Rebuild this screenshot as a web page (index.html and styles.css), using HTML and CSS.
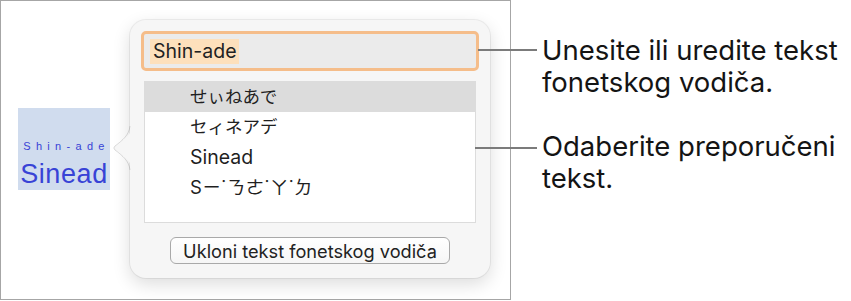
FILE: index.html
```html
<!DOCTYPE html>
<html lang="hr">
<head>
<meta charset="utf-8">
<title>Fonetski vodič</title>
<link rel="stylesheet" href="styles.css">
</head>
<body>
<div class="scene">
  <div class="frame">
    <div class="word">
      <span class="ruby">Shin-ade</span>
      <span class="base">Sinead</span>
    </div>
    <div class="popover">
      <svg class="arrow" width="22" height="46" viewBox="0 0 22 46">
        <path d="M21 0 C21 10 13 15 4 21 Q1.5 23 4 25 C13 31 21 36 21 46 Z" fill="#f6f6f6"/>
        <path d="M19 1 C18 10 12 15 4 21 Q1.5 23 4 25 C12 31 18 36 19 45" fill="none" stroke="rgba(0,0,0,0.13)" stroke-width="1"/>
      </svg>
      <div class="field"><span class="sel">Shin-ade</span></div>
      <ul class="list">
        <li class="row cjk active">せぃねあで</li>
        <li class="row cjk">セィネアデ</li>
        <li class="row">Sinead</li>
        <li class="row bopo">Sㄧ˙ㄋㄜ˙ㄚ˙ㄉ</li>
      </ul>
      <div class="actions"><button class="btn">Ukloni tekst fonetskog vodiča</button></div>
    </div>
  </div>
  <div class="notes">
    <p class="note">Unesite ili uredite tekst<br>fonetskog vodiča.</p>
    <p class="note second">Odaberite preporučeni<br>tekst.</p>
  </div>
  <span class="leader leader-1"></span>
  <span class="leader leader-2"></span>
</div>
</body>
</html>
```
FILE: styles.css
```css
* { box-sizing: border-box; }
html, body { margin: 0; padding: 0; background: #fff; }
body { font-family: Inter, "Noto Sans CJK JP", sans-serif; color: #1d1d1d; }

.scene {
  position: relative;
  display: flex;
  align-items: flex-start;
  width: 851px;
  height: 301px;
}

.frame {
  display: flex;
  align-items: flex-start;
  width: 511px;
  height: 300px;
  border: 1px solid #a6a6a6;
  padding: 19px 0 0 17px;
  background: #fff;
}

.word {
  display: flex;
  flex-direction: column;
  align-items: center;
  width: 92px;
  height: 82px;
  margin-top: 88px;
  padding-top: 31px;
  background: #d0dcee;
  color: #3843d6;
  font-family: "Liberation Sans", Arial, sans-serif;
}
.ruby {
  font-size: 11px;
  line-height: 14px;
  letter-spacing: 5.3px;
  margin-left: 5px;
}
.base {
  margin-top: 6px;
  font-size: 27px;
  line-height: 30px;
  letter-spacing: 0.6px;
}

.popover {
  position: relative;
  display: flex;
  flex-direction: column;
  width: 360px;
  height: 258px;
  margin-left: 20px;
  padding: 11px;
  background: #f6f6f6;
  border-radius: 16px;
  box-shadow: 0 0 0 1px rgba(0,0,0,0.06), 0 6px 18px rgba(0,0,0,0.14);
}
.arrow {
  position: absolute;
  left: -19px;
  top: 105px;
}

.field {
  display: flex;
  align-items: center;
  height: 40px;
  padding-left: 6px;
  border: 3px solid #f5bd8a;
  border-radius: 5px;
  background: #ebebeb;
}
.sel {
  background: #fde0bc;
  font-size: 19.5px;
  line-height: 25px;
  padding: 0 2px 0 3px;
  color: #222;
}

.list {
  list-style: none;
  margin: 10px 3px 0 3px;
  padding: 0;
  height: 142px;
  border: 1px solid #dcdcdc;
  background: #fff;
}
.row {
  height: 30px;
  line-height: 30px;
  padding-left: 45px;
  font-size: 19.5px;
  color: #1f1f1f;
}
.row.cjk { font-size: 17.5px; }
.row.active { background: #dcdcdc; }
.row.bopo {
  font-family: Inter, "Noto Sans CJK TC", sans-serif;
  font-size: 18.5px;
  letter-spacing: 0.6px;
}

.actions {
  display: flex;
  justify-content: center;
  margin-top: 14px;
}
.btn {
  width: 280px;
  height: 27px;
  padding: 0;
  border: 1px solid #a9a9a9;
  border-radius: 6px;
  background: linear-gradient(#ffffff, #f6f6f6);
  font-family: Inter, sans-serif;
  font-size: 18.2px;
  color: #222;
}

.notes {
  margin-left: 31px;
  padding-top: 35px;
}
.note {
  margin: 0;
  font-size: 27.5px;
  line-height: 31.5px;
  color: #141414;
}
.note.second { margin-top: 33px; }

.leader {
  position: absolute;
  height: 2px;
  background: #7b7b7b;
}
.leader-1 { left: 478px; top: 49px; width: 59px; }
.leader-2 { left: 475px; top: 147px; width: 62px; }
```
